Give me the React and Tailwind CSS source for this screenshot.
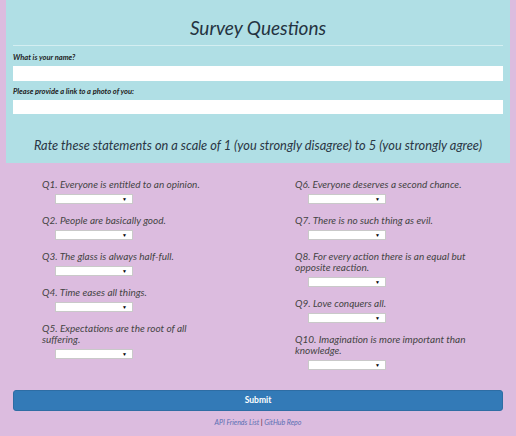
import React from "react";

const questions = [
  "Everyone is entitled to an opinion.",
  "People are basically good.",
  "The glass is always half-full.",
  "Time eases all things.",
  "Expectations are the root of all suffering.",
  "Everyone deserves a second chance.",
  "There is no such thing as evil.",
  "For every action there is an equal but opposite reaction.",
  "Love conquers all.",
  "Imagination is more important than knowledge.",
];

const font = { fontFamily: "Lato, 'Noto Sans', sans-serif" };

const Question = ({ n, text }) => (
  <div className="mb-[11px]">
    <p className="text-[10px] leading-[11px] italic text-[#444] w-[172px]">
      Q{n}. {text}
    </p>
    <div className="mt-[4px] ml-[13px] w-[78px] h-[10px] bg-white border border-[#c9c9c9] flex items-center justify-end pr-[5px]">
      <span className="text-[5px] leading-none text-black">▼</span>
    </div>
  </div>
);

export default function App() {
  return (
    <div className="min-h-[436px] bg-[#dcbcdf]" style={font}>
      <div className="mx-[6px] bg-[#b0dfe5] px-[7px] pb-[9px]">
        <h1 className="pt-[16px] text-center text-[19px] leading-[24px] italic text-[#243341]">
          Survey Questions
        </h1>
        <hr className="mt-[5px] border-t border-[#d4eef1]" />
        <label className="block mt-[7px] text-[7.5px] leading-[10px] font-bold italic text-[#222]">
          What is your name?
        </label>
        <div className="mt-[3px] h-[15px] bg-white" />
        <label className="block mt-[6px] text-[7.5px] leading-[10px] font-bold italic text-[#222]">
          Please provide a link to a photo of you:
        </label>
        <div className="mt-[3px] h-[14px] bg-white" />
        <p className="mt-[22px] text-center text-[12.8px] leading-[18px] italic text-[#2a3644]">
          Rate these statements on a scale of 1 (you strongly disagree) to 5 (you strongly agree)
        </p>
      </div>
      <div className="grid grid-cols-[253px_1fr] pt-[16px] pl-[42px]">
        <div>
          {questions.slice(0, 5).map((q, i) => (
            <Question key={i} n={i + 1} text={q} />
          ))}
        </div>
        <div>
          {questions.slice(5).map((q, i) => (
            <Question key={i} n={i + 6} text={q} />
          ))}
        </div>
      </div>
      <div className="px-[13px] mt-[4px]">
        <button className="w-full h-[21px] rounded-[3px] bg-[#337ab7] border border-[#2e6da4] text-white text-[8.5px] font-bold">
          Submit
        </button>
      </div>
      <p className="mt-[6px] pb-[8px] text-center text-[7px] leading-[10px] italic">
        <span className="text-[#5a6fb3]">API Friends List</span>
        <span className="text-[#7a3a4a] font-bold"> | </span>
        <span className="text-[#5a6fb3]">GitHub Repo</span>
      </p>
    </div>
  );
}
